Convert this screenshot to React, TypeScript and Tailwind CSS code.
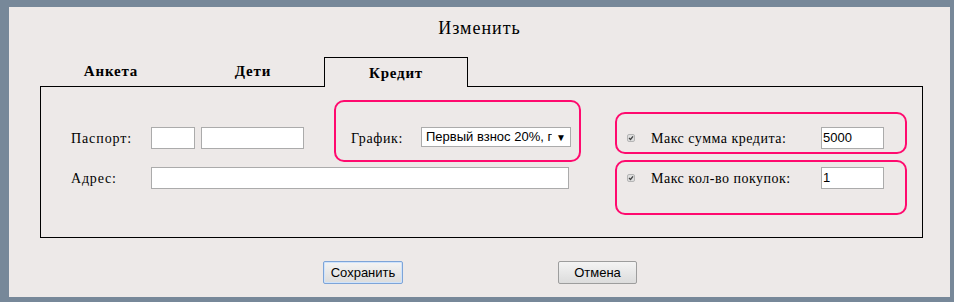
import React from "react";

const serif = { fontFamily: '"Liberation Serif", "Times New Roman", serif' };
const sans = { fontFamily: '"Liberation Sans", Arial, sans-serif' };

function Tick() {
  return (
    <span className="flex h-[8px] w-[8px] items-center justify-center rounded-[2px] border border-[#b5b5b5] bg-[#dedede]">
      <svg width="6" height="6" viewBox="0 0 6 6">
        <path d="M1 3 L2.5 4.5 L5 1.3" fill="none" stroke="#444" strokeWidth="1.3" />
      </svg>
    </span>
  );
}

function TextBox({ w, value = "" }: { w: string; value?: string }) {
  return (
    <div
      className={`${w} flex h-[22px] items-center border border-[#ababab] bg-white pl-[1px] text-[13px] text-black`}
      style={sans}
    >
      {value}
    </div>
  );
}

export default function App() {
  const tabs = ["Анкета", "Дети", "Кредит"];
  return (
    <div className="h-[302px] w-[954px] overflow-hidden bg-[#778899] pl-[9px] pr-[4px] pt-[7px] pb-[5px]">
      <div className="flex h-full flex-col bg-[#ede9e8] text-black" style={serif}>
        <div className="flex h-[45px] items-end justify-center pb-[10px] text-[18px] tracking-[1px]">
          Изменить
        </div>

        {/* tabs */}
        <div className="ml-[31px] flex h-[34px] items-end">
          {tabs.map((t) => (
            <div
              key={t}
              className={
                t === "Кредит"
                  ? "relative -mb-[1px] flex h-[30px] w-[144px] items-center justify-center border border-b-0 border-black bg-[#ede9e8] pt-[1px] text-[15px] font-bold tracking-[0.8px]"
                  : "flex h-[30px] w-[142px] items-center justify-center pt-[1px] text-[15px] font-bold tracking-[0.8px]"
              }
            >
              {t}
            </div>
          ))}
        </div>

        {/* panel */}
        <div className="ml-[31px] flex h-[152px] w-[883px] border border-black">
          <div className="flex w-[574px] flex-col pl-[30px] pt-[13px]">
            <div className="flex items-start">
              <div className="mt-[27px] flex items-center">
                <span className="w-[80px] text-[14px] tracking-[0.9px]">Паспорт:</span>
                <TextBox w="w-[44px]" />
                <div className="w-[6px]" />
                <TextBox w="w-[103px]" />
              </div>
              <div className="ml-[30px] flex h-[62px] w-[247px] items-start rounded-[10px] border-2 border-[#ff0a6e] pl-[15px] pt-[25px]">
                <span className="w-[70px] pt-[1px] text-[14px] tracking-[0.6px]">График:</span>
                <div
                  className="flex h-[20px] w-[150px] items-center justify-between border border-[#ababab] bg-white pl-[4px] pr-[4px] text-[13px]"
                  style={sans}
                >
                  <span className="overflow-hidden whitespace-nowrap">Первый взнос 20%, г</span>
                  <span className="text-[10px]">▼</span>
                </div>
              </div>
            </div>
            <div className="mt-[5px] flex items-center">
              <span className="w-[80px] text-[14px] tracking-[0.8px]">Адрес:</span>
              <TextBox w="w-[418px]" />
            </div>
          </div>

          <div className="flex flex-col pt-[25px]">
            <div className="flex h-[42px] w-[292px] items-start rounded-[10px] border-2 border-[#ff0a6e] pl-[10px] pt-[13px]">
              <div className="flex h-[22px] items-center">
                <Tick />
                <span className="ml-[16px] w-[170px] text-[14px] tracking-[0.5px]">Макс сумма кредита:</span>
                <TextBox w="w-[63px]" value="5000" />
              </div>
            </div>
            <div className="mt-[6px] flex h-[55px] w-[292px] items-start rounded-[10px] border-2 border-[#ff0a6e] pl-[10px] pt-[5px]">
              <div className="flex h-[22px] items-center">
                <Tick />
                <span className="ml-[16px] w-[170px] text-[14px] tracking-[0.5px]">Макс кол-во покупок:</span>
                <TextBox w="w-[63px]" value="1" />
              </div>
            </div>
          </div>
        </div>

        {/* buttons */}
        <div className="flex pt-[23px]" style={sans}>
          <button className="ml-[314px] h-[23px] w-[80px] rounded-[2px] border border-[#7da4d8] bg-gradient-to-b from-[#f4f4f4] to-[#dcdcdc] text-[13px] shadow-[inset_0_0_0_1px_#cfe3fb]">
            Сохранить
          </button>
          <button className="ml-[155px] h-[23px] w-[79px] rounded-[2px] border border-[#9d9d9d] bg-gradient-to-b from-[#f4f4f4] to-[#dcdcdc] text-[13px]">
            Отмена
          </button>
        </div>
      </div>
    </div>
  );
}
